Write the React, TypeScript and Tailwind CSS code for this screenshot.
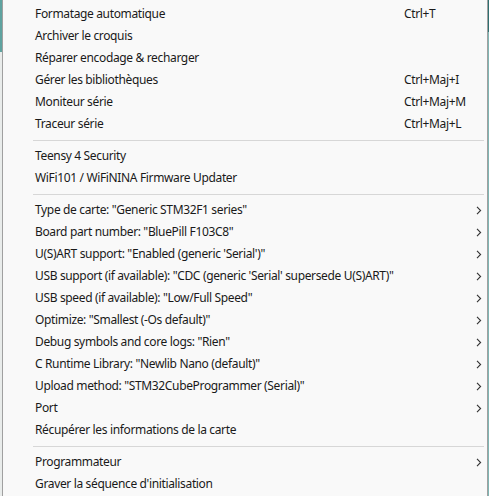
type Item = { label: string; shortcut?: string; sub?: boolean } | "sep";

const items: Item[] = [
  { label: "Formatage automatique", shortcut: "Ctrl+T" },
  { label: "Archiver le croquis" },
  { label: "Réparer encodage & recharger" },
  { label: "Gérer les bibliothèques", shortcut: "Ctrl+Maj+I" },
  { label: "Moniteur série", shortcut: "Ctrl+Maj+M" },
  { label: "Traceur série", shortcut: "Ctrl+Maj+L" },
  "sep",
  { label: "Teensy 4 Security" },
  { label: "WiFi101 / WiFiNINA Firmware Updater" },
  "sep",
  { label: 'Type de carte: "Generic STM32F1 series"', sub: true },
  { label: 'Board part number: "BluePill F103C8"', sub: true },
  { label: "U(S)ART support: \"Enabled (generic 'Serial')\"", sub: true },
  { label: "USB support (if available): \"CDC (generic 'Serial' supersede U(S)ART)\"", sub: true },
  { label: 'USB speed (if available): "Low/Full Speed"', sub: true },
  { label: 'Optimize: "Smallest (-Os default)"', sub: true },
  { label: 'Debug symbols and core logs: "Rien"', sub: true },
  { label: 'C Runtime Library: "Newlib Nano (default)"', sub: true },
  { label: 'Upload method: "STM32CubeProgrammer (Serial)"', sub: true },
  { label: "Port", sub: true },
  { label: "Récupérer les informations de la carte" },
  "sep",
  { label: "Programmateur", sub: true },
  { label: "Graver la séquence d'initialisation" },
];

function Chevron() {
  return (
    <svg width="6" height="9" viewBox="0 0 6 9" className="text-[#333]">
      <polyline points="1,0.8 4.6,4.5 1,8.2" fill="none" stroke="currentColor" strokeWidth="1.1" />
    </svg>
  );
}

export default function App() {
  return (
    <div className="flex h-[496px] w-[489px] bg-[#f9f9f9] overflow-hidden">
      {/* left edge of window behind */}
      <div className="flex w-[2px] flex-col">
        <div className="h-[52px] bg-[#5fa3a0]" />
        <div className="flex-1 bg-[#e9eceb]" />
      </div>

      {/* Menu */}
      <div
        className="flex w-[486px] flex-col border-x border-[#a0a0a0] bg-[#f9f9f9] pt-[3px] text-[12px] tracking-[-0.35px] text-[#1a1a1a]"
        style={{ fontFamily: '"Segoe UI", "Noto Sans", "Open Sans", sans-serif' }}
      >
        {items.map((it, i) =>
          it === "sep" ? (
            <div key={i} className="flex h-[10px] items-center pl-[30px] pr-[3px]">
              <div className="h-px w-full bg-[#d7d7d7]" />
            </div>
          ) : (
            <div key={i} className="flex h-[22px] items-center pl-[32px] pr-[2px]">
              <span className="flex-1 whitespace-nowrap">{it.label}</span>
              {it.shortcut && <span className="w-[69px] whitespace-nowrap">{it.shortcut}</span>}
              <span className="flex w-[12px] justify-center">{it.sub && <Chevron />}</span>
            </div>
          )
        )}
      </div>

      {/* right edge of window behind */}
      <div className="flex w-[1px] flex-col">
        <div className="h-[32px] bg-[#2f6f70]" />
        <div className="flex-1 bg-[#7fb5b3]" />
      </div>
    </div>
  );
}
